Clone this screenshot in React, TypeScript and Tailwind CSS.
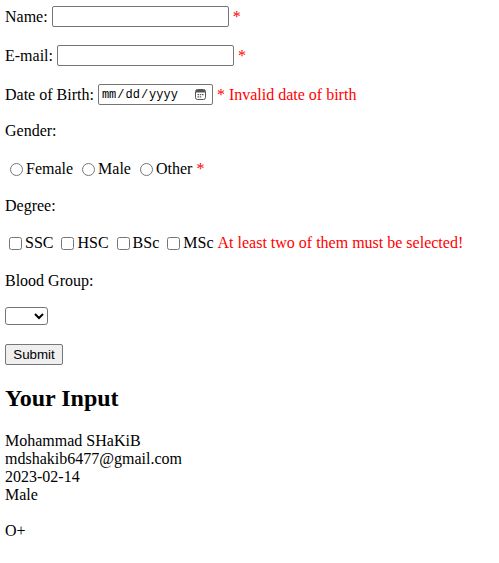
function CalendarIcon() {
  return (
    <svg width="11" height="11" viewBox="0 0 11 11" fill="none">
      <rect x="0.5" y="0.5" width="10" height="10" rx="2" stroke="#555" />
      <rect x="1" y="1" width="9" height="2.5" fill="#555" />
      <rect x="2.5" y="5" width="1.5" height="1.2" fill="#555" />
      <rect x="4.75" y="5" width="1.5" height="1.2" fill="#555" />
      <rect x="7" y="5" width="1.5" height="1.2" fill="#555" />
      <rect x="2.5" y="7.3" width="1.5" height="1.2" fill="#555" />
      <rect x="4.75" y="7.3" width="1.5" height="1.2" fill="#555" />
    </svg>
  );
}

export default function App() {
  return (
    <div className="min-h-screen bg-white px-[5px] font-['Liberation_Serif',serif] text-[16px] leading-[18px] text-black">
      <form className="flex flex-col items-start" onSubmit={(e) => e.preventDefault()}>
        {/* Name */}
        <div className="mt-[6px] flex h-[21px] items-center">
          <span>Name:</span>
          <input
            type="text"
            className="ml-[4px] h-[21px] w-[177px] rounded-[2px] border border-[#767676] bg-white px-[2px] font-['Liberation_Sans',sans-serif] text-[13.33px]"
          />
          <span className="ml-[4px] text-[#ff0000]">*</span>
        </div>

        {/* Email */}
        <div className="mt-[18px] flex h-[21px] items-center">
          <span>E-mail:</span>
          <input
            type="email"
            className="ml-[4px] h-[21px] w-[177px] rounded-[2px] border border-[#767676] bg-white px-[2px] font-['Liberation_Sans',sans-serif] text-[13.33px]"
          />
          <span className="ml-[4px] text-[#ff0000]">*</span>
        </div>

        {/* Date of birth */}
        <div className="mt-[18px] flex h-[21px] items-center">
          <span>Date of Birth:</span>
          <span className="relative ml-[4px] flex">
            <input
              type="date"
              className="h-[21px] w-[115px] rounded-[2px] border border-[#767676] bg-white px-[2px] font-['Liberation_Mono',monospace] text-[12px] [&::-webkit-calendar-picker-indicator]:opacity-0"
            />
            <span className="pointer-events-none absolute right-[7px] top-[5px]">
              <CalendarIcon />
            </span>
          </span>
          <span className="ml-[4px] text-[#ff0000]">* Invalid date of birth</span>
        </div>

        {/* Gender */}
        <div className="mt-[17px] h-[18px]">Gender:</div>
        <div className="mt-[20px] flex h-[18px] items-center">
          <input type="radio" name="gender" className="ml-[5px] mr-[3px] h-[13px] w-[13px]" />
          <span>Female</span>
          <input type="radio" name="gender" className="ml-[9px] mr-[3px] h-[13px] w-[13px]" />
          <span>Male</span>
          <input type="radio" name="gender" className="ml-[9px] mr-[3px] h-[13px] w-[13px]" />
          <span>Other</span>
          <span className="ml-[4px] text-[#ff0000]">*</span>
        </div>

        {/* Degree */}
        <div className="mt-[19px] h-[18px]">Degree:</div>
        <div className="mt-[19px] flex h-[18px] items-center">
          <input type="checkbox" className="ml-[4px] mr-[3px] h-[13px] w-[13px]" />
          <span>SSC</span>
          <input type="checkbox" className="ml-[8px] mr-[3px] h-[13px] w-[13px]" />
          <span>HSC</span>
          <input type="checkbox" className="ml-[8px] mr-[3px] h-[13px] w-[13px]" />
          <span>BSc</span>
          <input type="checkbox" className="ml-[8px] mr-[3px] h-[13px] w-[13px]" />
          <span>MSc</span>
          <span className="ml-[4px] text-[#ff0000]">At least two of them must be selected!</span>
        </div>

        {/* Blood group */}
        <div className="mt-[20px] h-[18px]">Blood Group:</div>
        <select className="mt-[17px] h-[18px] w-[43px] rounded-[3px] border border-[#767676] bg-white font-['Liberation_Sans',sans-serif] text-[13.33px]">
          <option value=""></option>
          <option>A+</option>
          <option>B+</option>
          <option>O+</option>
          <option>AB+</option>
        </select>

        <button
          type="submit"
          className="mt-[19px] h-[21px] w-[58px] rounded-[2px] border border-[#767676] bg-[#efefef] font-['Liberation_Sans',sans-serif] text-[13.33px] leading-[15px]"
        >
          Submit
        </button>
      </form>

      <h2 className="mt-[19px] text-[24px] font-bold leading-[28px]">Your Input</h2>

      <div className="mt-[20px]">
        <div>Mohammad SHaKiB</div>
        <div>mdshakib6477@gmail.com</div>
        <div>2023-02-14</div>
        <div>Male</div>
        <div className="h-[18px]"></div>
        <div>O+</div>
      </div>
    </div>
  );
}
